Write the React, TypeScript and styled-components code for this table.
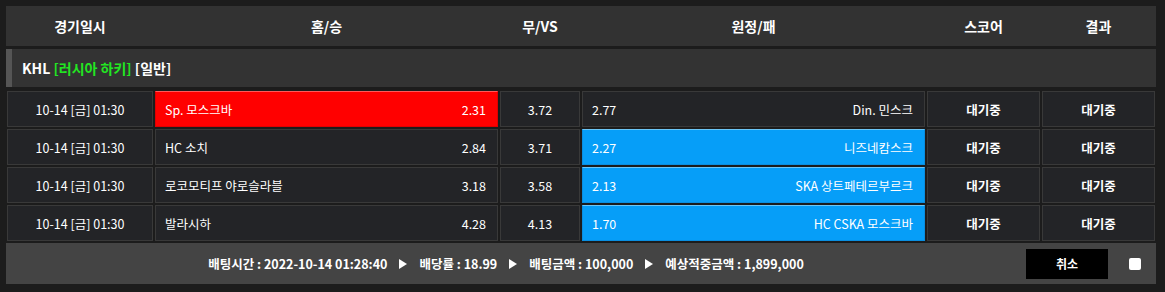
import styled, { createGlobalStyle, css } from 'styled-components';

const GlobalStyle = createGlobalStyle`
  html, body {
    margin: 0;
    padding: 0;
    background: #1c1c1c;
  }
  body {
    font-family: "Noto Sans CJK KR", "Noto Sans", sans-serif;
    color: #fff;
  }
`;

type Pick = 'home' | 'away' | null;

interface Game {
  time: string;
  home: string;
  homeOdds: string;
  draw: string;
  awayOdds: string;
  away: string;
  pick: Pick;
}

const games: Game[] = [
  { time: '10-14 [금] 01:30', home: 'Sp. 모스크바', homeOdds: '2.31', draw: '3.72', awayOdds: '2.77', away: 'Din. 민스크', pick: 'home' },
  { time: '10-14 [금] 01:30', home: 'HC 소치', homeOdds: '2.84', draw: '3.71', awayOdds: '2.27', away: '니즈네캄스크', pick: 'away' },
  { time: '10-14 [금] 01:30', home: '로코모티프 야로슬라블', homeOdds: '3.18', draw: '3.58', awayOdds: '2.13', away: 'SKA 상트페테르부르크', pick: 'away' },
  { time: '10-14 [금] 01:30', home: '발라시하', homeOdds: '4.28', draw: '4.13', awayOdds: '1.70', away: 'HC CSKA 모스크바', pick: 'away' },
];

const COLUMNS = '146px 343px 80px 343px 113px 113px';

export default function App() {
  return (
    <>
      <GlobalStyle />
      <Page>
        <Board>
          <HeaderRow>
            <HeadCell>경기일시</HeadCell>
            <HeadCell>홈/승</HeadCell>
            <HeadCell>무/VS</HeadCell>
            <HeadCell>원정/패</HeadCell>
            <HeadCell>스코어</HeadCell>
            <HeadCell>결과</HeadCell>
          </HeaderRow>

          <LeagueBar>
            KHL <Green>[러시아 하키]</Green> [일반]
          </LeagueBar>

          <Rows>
            {games.map((g, i) => (
              <GameRow key={i}>
                <Cell>{g.time}</Cell>
                <OddsCell $tone={g.pick === 'home' ? 'red' : undefined}>
                  <span>{g.home}</span>
                  <span>{g.homeOdds}</span>
                </OddsCell>
                <Cell>{g.draw}</Cell>
                <OddsCell $tone={g.pick === 'away' ? 'blue' : undefined}>
                  <span>{g.awayOdds}</span>
                  <span>{g.away}</span>
                </OddsCell>
                <Cell $bold>대기중</Cell>
                <Cell $bold>대기중</Cell>
              </GameRow>
            ))}
          </Rows>

          <Footer>
            <Summary>
              <span>배팅시간 : 2022-10-14 01:28:40</span>
              <Arrow />
              <span>배당률 : 18.99</span>
              <Arrow />
              <span>배팅금액 : 100,000</span>
              <Arrow />
              <span>예상적중금액 : 1,899,000</span>
            </Summary>
            <CancelButton>취소</CancelButton>
            <CheckBox type="checkbox" />
          </Footer>
        </Board>
      </Page>
    </>
  );
}

const Arrow = () => (
  <ArrowIcon width="8" height="10" viewBox="0 0 8 10">
    <path d="M0 0 L8 5 L0 10 Z" fill="#fff" />
  </ArrowIcon>
);

const Page = styled.div`
  padding: 6px;
  width: 1150px;
`;

const Board = styled.div`
  display: flex;
  flex-direction: column;
`;

const HeaderRow = styled.div`
  display: grid;
  grid-template-columns: ${COLUMNS};
  column-gap: 2px;
  padding: 0 1px;
  height: 40px;
  background: #323232;
`;

const HeadCell = styled.div`
  display: flex;
  align-items: center;
  justify-content: center;
  font-size: 14px;
  font-weight: bold;
`;

const LeagueBar = styled.div`
  margin-top: 3px;
  height: 38px;
  display: flex;
  align-items: center;
  padding-left: 10px;
  background: #333;
  border-left: 6px solid #555;
  font-size: 14px;
  font-weight: bold;
  white-space: pre;
`;

const Green = styled.span`
  color: #22e622;
`;

const Rows = styled.div`
  margin-top: 4px;
  display: flex;
  flex-direction: column;
  gap: 2px;
  padding: 0 1px;
`;

const GameRow = styled.div`
  display: grid;
  grid-template-columns: ${COLUMNS};
  column-gap: 2px;
  height: 36px;
`;

const Cell = styled.div<{ $bold?: boolean }>`
  display: flex;
  align-items: center;
  justify-content: center;
  background: #232427;
  border: 1px solid #393939;
  font-size: 12.5px;
  font-weight: ${p => (p.$bold ? 'bold' : 'normal')};
`;

const tones = {
  red: css`
    background: #ff0000;
    border-color: #e00000;
    border-top-color: #ff5a5a;
  `,
  blue: css`
    background: #069ef8;
    border-color: #0a8ee0;
    border-top-color: #6cc6f7;
  `,
};

const OddsCell = styled(Cell)<{ $tone?: 'red' | 'blue' }>`
  justify-content: space-between;
  padding: 0 11px 0 9px;
  ${p => p.$tone && tones[p.$tone]}
`;

const Footer = styled.div`
  margin-top: 2px;
  height: 41px;
  display: flex;
  align-items: center;
  background: #444;
`;

const Summary = styled.div`
  flex: 1;
  display: flex;
  align-items: center;
  justify-content: center;
  gap: 12px;
  padding-left: 0;
  font-size: 12.5px;
  font-weight: bold;
`;

const ArrowIcon = styled.svg`
  display: block;
`;

const CancelButton = styled.button`
  width: 82px;
  height: 30px;
  margin-left: 20px;
  background: #000;
  border: none;
  color: #fff;
  font-family: inherit;
  font-size: 12px;
  font-weight: bold;
  cursor: pointer;
`;

const CheckBox = styled.input`
  appearance: none;
  width: 12px;
  height: 12px;
  margin: 0 15px 0 21px;
  background: #fff;
  border-radius: 2px;
`;
